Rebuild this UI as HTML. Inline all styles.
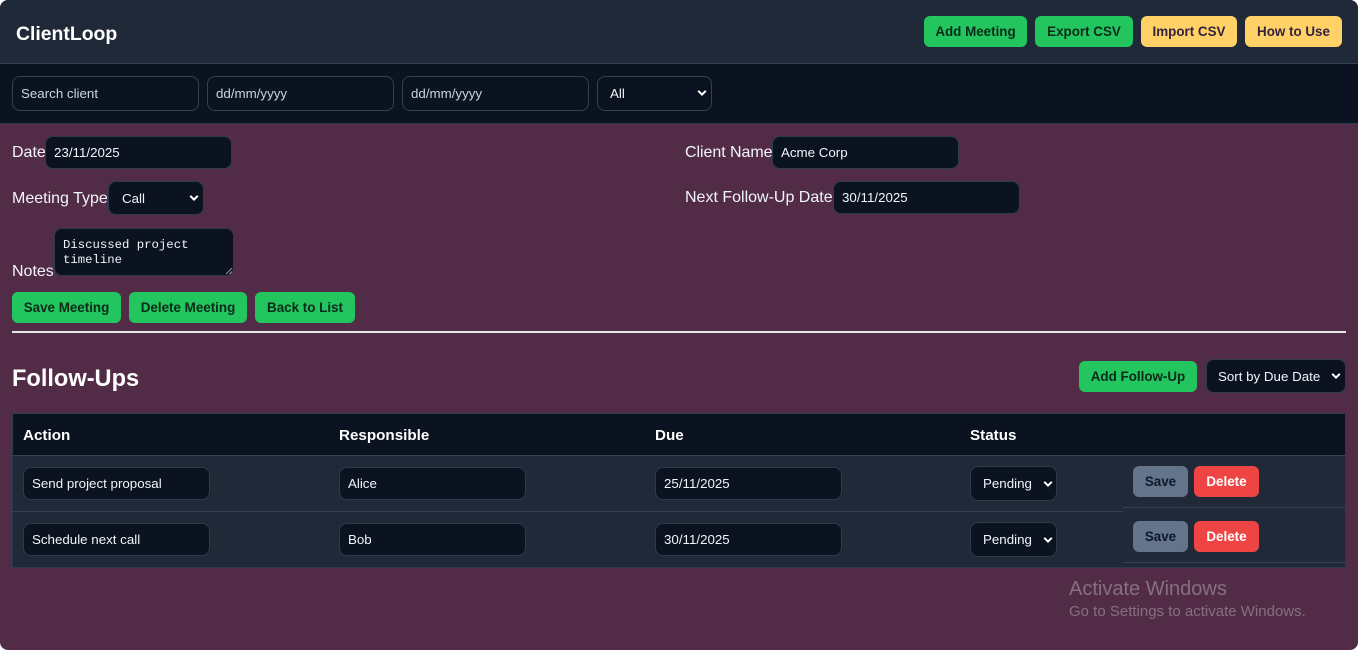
<!DOCTYPE html>
<html>
<head>
<meta charset="utf-8">
<style>
html,body{margin:0;padding:0;background:#fff;}
#p{position:relative;width:1358px;height:650px;overflow:hidden;background:#522c47;border-radius:8px;font-family:"Liberation Sans",sans-serif;color:#f1f5f9;}
#p div{position:absolute;box-sizing:border-box;white-space:nowrap;}
.i{background:#0b1220;border:1px solid #2b3a4d;border-radius:8px;font-size:13.33px;color:#f1f5f9;padding-left:8px;padding-bottom:1px;display:flex;align-items:center;}
.f{border-color:#334155;color:#cbd5e1;}
.b{border-radius:6px;font-size:13.4px;font-weight:700;text-align:center;color:#0b2a1a;background:#22c55e;line-height:31px;height:31px;}
.y{background:#ffd166;color:#33233f;}
.l{font-size:16px;line-height:20px;color:#f1f5f9;}
.th{font-size:15.2px;font-weight:700;color:#fff;line-height:20px;top:426px;}
svg{position:absolute;}
</style>
</head>
<body>
<div id="p">
  <div style="left:0;top:0;width:1358px;height:64px;background:#1f2937;border-bottom:1px solid #334155;"></div>
  <div style="left:0;top:64px;width:1358px;height:60px;background:#0b1220;border-bottom:1px solid #2b3a4d;"></div>
  <div style="left:16px;top:22px;font-size:19.4px;line-height:24px;font-weight:700;color:#fff;">ClientLoop</div>

  <div class="b" style="left:924px;top:16px;width:103px;">Add Meeting</div>
  <div class="b" style="left:1035px;top:16px;width:98px;">Export CSV</div>
  <div class="b y" style="left:1141px;top:16px;width:96px;">Import CSV</div>
  <div class="b y" style="left:1245px;top:16px;width:97px;">How to Use</div>

  <div class="i f" style="left:12px;top:76px;width:187px;height:35px;">Search client</div>
  <div class="i f" style="left:207px;top:76px;width:187px;height:35px;">dd/mm/yyyy</div>
  <div class="i f" style="left:402px;top:76px;width:187px;height:35px;">dd/mm/yyyy</div>
  <div class="i f" style="left:597px;top:76px;width:115px;height:35px;padding-left:12px;color:#f1f5f9;">All</div>
  <svg style="left:697px;top:89px" width="10" height="8" viewBox="0 0 10 8"><path d="M1.2 1.8L5 5.6L8.8 1.8" fill="none" stroke="#fff" stroke-width="2"/></svg>

  <div class="l" style="left:12px;top:143px;">Date</div>
  <div class="i" style="left:45px;top:136px;width:187px;height:33px;">23/11/2025</div>
  <div class="l" style="left:12px;top:189px;">Meeting Type</div>
  <div class="i" style="left:108px;top:181px;width:96px;height:34px;padding-left:13px;padding-bottom:0;padding-top:1px;">Call</div>
  <svg style="left:189px;top:194px" width="10" height="8" viewBox="0 0 10 8"><path d="M1.2 1.8L5 5.6L8.8 1.8" fill="none" stroke="#fff" stroke-width="2"/></svg>
  <div class="l" style="left:12px;top:262px;">Notes</div>
  <div class="i" style="left:54px;top:228px;width:180px;height:48px;padding:0;"></div>
  <div style="left:63px;top:238px;font-family:'Liberation Mono',monospace;font-size:12.3px;line-height:15px;color:#f1f5f9;">Discussed project<br>timeline</div>
  <svg style="left:225px;top:267px" width="8" height="8" viewBox="0 0 8 8"><path d="M1 7L7 1M4.5 7L7 4.5" stroke="#8b94a3" stroke-width="1" fill="none"/></svg>

  <div class="l" style="left:685px;top:143px;letter-spacing:-.05px;">Client Name</div>
  <div class="i" style="left:772px;top:136px;width:187px;height:33px;">Acme Corp</div>
  <div class="l" style="left:685px;top:188px;">Next Follow-Up Date</div>
  <div class="i" style="left:833px;top:181px;width:187px;height:33px;">30/11/2025</div>

  <div class="b" style="left:12px;top:292px;width:109px;">Save Meeting</div>
  <div class="b" style="left:129px;top:292px;width:118px;">Delete Meeting</div>
  <div class="b" style="left:255px;top:292px;width:100px;">Back to List</div>
  <div style="left:12px;top:331px;width:1334px;height:2px;background:#e5e7eb;"></div>

  <div style="left:12px;top:365px;font-size:23.6px;line-height:29px;font-weight:700;color:#fff;">Follow-Ups</div>
  <div class="b" style="left:1079px;top:361px;width:118px;">Add Follow-Up</div>
  <div class="i" style="left:1206px;top:359px;width:140px;height:34px;padding-left:11px;padding-bottom:0;">Sort by Due Date</div>
  <svg style="left:1331px;top:372px" width="10" height="8" viewBox="0 0 10 8"><path d="M1.2 1.8L5 5.6L8.8 1.8" fill="none" stroke="#fff" stroke-width="2"/></svg>

  <div style="left:12px;top:413px;width:1334px;height:155px;background:#1f2937;border:1px solid #2b3a4d;"></div>
  <div style="left:13px;top:414px;width:1332px;height:41px;background:#0b1220;"></div>
  <div style="left:13px;top:455px;width:1332px;height:1px;background:#334155;"></div>
  <div style="left:13px;top:511px;width:1110px;height:1px;background:#334155;"></div>
  <div style="left:1123px;top:507px;width:222px;height:1px;background:#334155;"></div>
  <div style="left:1123px;top:562px;width:222px;height:1px;background:#334155;"></div>

  <div class="th" style="left:23px;">Action</div>
  <div class="th" style="left:339px;">Responsible</div>
  <div class="th" style="left:655px;">Due</div>
  <div class="th" style="left:970px;">Status</div>

  <div class="i" style="left:23px;top:467px;width:187px;height:33px;">Send project proposal</div>
  <div class="i" style="left:339px;top:467px;width:187px;height:33px;">Alice</div>
  <div class="i" style="left:655px;top:467px;width:187px;height:33px;">25/11/2025</div>
  <div class="i" style="left:970px;top:466px;width:87px;height:35px;padding-left:12px;">Pending</div>
  <svg style="left:1043px;top:480px" width="10" height="8" viewBox="0 0 10 8"><path d="M1.2 1.8L5 5.6L8.8 1.8" fill="none" stroke="#fff" stroke-width="2"/></svg>
  <div class="b" style="left:1133px;top:466px;width:55px;background:#64748b;color:#0f172a;">Save</div>
  <div class="b" style="left:1194px;top:466px;width:65px;background:#ef4444;color:#fff;">Delete</div>

  <div class="i" style="left:23px;top:523px;width:187px;height:33px;">Schedule next call</div>
  <div class="i" style="left:339px;top:523px;width:187px;height:33px;">Bob</div>
  <div class="i" style="left:655px;top:523px;width:187px;height:33px;">30/11/2025</div>
  <div class="i" style="left:970px;top:522px;width:87px;height:35px;padding-left:12px;">Pending</div>
  <svg style="left:1043px;top:536px" width="10" height="8" viewBox="0 0 10 8"><path d="M1.2 1.8L5 5.6L8.8 1.8" fill="none" stroke="#fff" stroke-width="2"/></svg>
  <div class="b" style="left:1133px;top:521px;width:55px;background:#64748b;color:#0f172a;">Save</div>
  <div class="b" style="left:1194px;top:521px;width:65px;background:#ef4444;color:#fff;">Delete</div>

  <div style="left:1069px;top:577px;font-size:20px;line-height:24px;color:#84707f;">Activate Windows</div>
  <div style="left:1069px;top:603px;font-size:15px;line-height:18px;color:#84707f;">Go to Settings to activate Windows.</div>
</div>
</body>
</html>
